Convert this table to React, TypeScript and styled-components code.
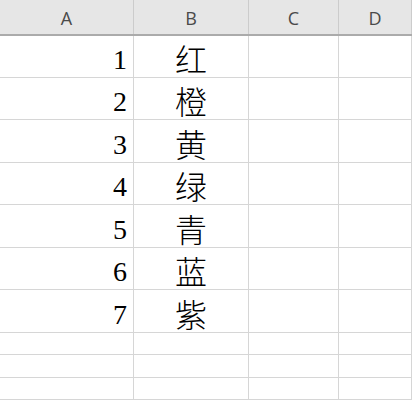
import React from 'react';
import styled, { createGlobalStyle } from 'styled-components';

const GlobalStyle = createGlobalStyle`
  html, body {
    margin: 0;
    padding: 0;
    background: #ffffff;
  }
`;

const columns = ['A', 'B', 'C', 'D'];

const rows: { num: number; color: string; height: number }[] = [
  { num: 1, color: '红', height: 42 },
  { num: 2, color: '橙', height: 42 },
  { num: 3, color: '黄', height: 43 },
  { num: 4, color: '绿', height: 42 },
  { num: 5, color: '青', height: 43 },
  { num: 6, color: '蓝', height: 42 },
  { num: 7, color: '紫', height: 43 },
];

const emptyRows = [22, 23, 22];

const App = () => {
  return (
    <>
      <GlobalStyle />
      <Sheet>
        <HeaderRow>
          {columns.map(col => (
            <HeaderCell key={col}>{col}</HeaderCell>
          ))}
        </HeaderRow>
        {rows.map(row => (
          <Row key={row.num} $height={row.height}>
            <NumberCell>{row.num}</NumberCell>
            <TextCell>{row.color}</TextCell>
            <Cell />
            <Cell />
          </Row>
        ))}
        {emptyRows.map((h, i) => (
          <Row key={`empty-${i}`} $height={h}>
            <Cell />
            <Cell />
            <Cell />
            <Cell />
          </Row>
        ))}
      </Sheet>
    </>
  );
};

const Sheet = styled.div`
  width: 412px;
  height: 400px;
  overflow: hidden;
  background: #ffffff;
`;

const gridColumns = '134px 115px 90px 1fr';

const HeaderRow = styled.div`
  display: grid;
  grid-template-columns: ${gridColumns};
  height: 36px;
  box-sizing: border-box;
  background: #e6e6e6;
  border-bottom: 2px solid #ababab;
`;

const HeaderCell = styled.div`
  display: flex;
  align-items: center;
  justify-content: center;
  padding-top: 2px;
  box-sizing: border-box;
  border-right: 1px solid #cccccc;
  font-family: "Open Sans", "Liberation Sans", sans-serif;
  font-size: 18px;
  color: #4a4a4a;
`;

const Row = styled.div<{ $height: number }>`
  display: grid;
  grid-template-columns: ${gridColumns};
  height: ${p => p.$height}px;
`;

const Cell = styled.div`
  box-sizing: border-box;
  border-right: 1px solid #d6d6d6;
  border-bottom: 1px solid #d6d6d6;
  display: flex;
  align-items: flex-end;
`;

const NumberCell = styled(Cell)`
  justify-content: flex-end;
  padding: 0 6px 3px 0;
  font-family: "Liberation Serif", "Times New Roman", serif;
  font-size: 28px;
  line-height: 1;
  color: #000000;
`;

const TextCell = styled(Cell)`
  justify-content: center;
  padding-bottom: 3px;
  font-family: "Noto Sans CJK SC", sans-serif;
  font-size: 32px;
  font-weight: 300;
  line-height: 1;
  color: #000000;
`;

export default App;
